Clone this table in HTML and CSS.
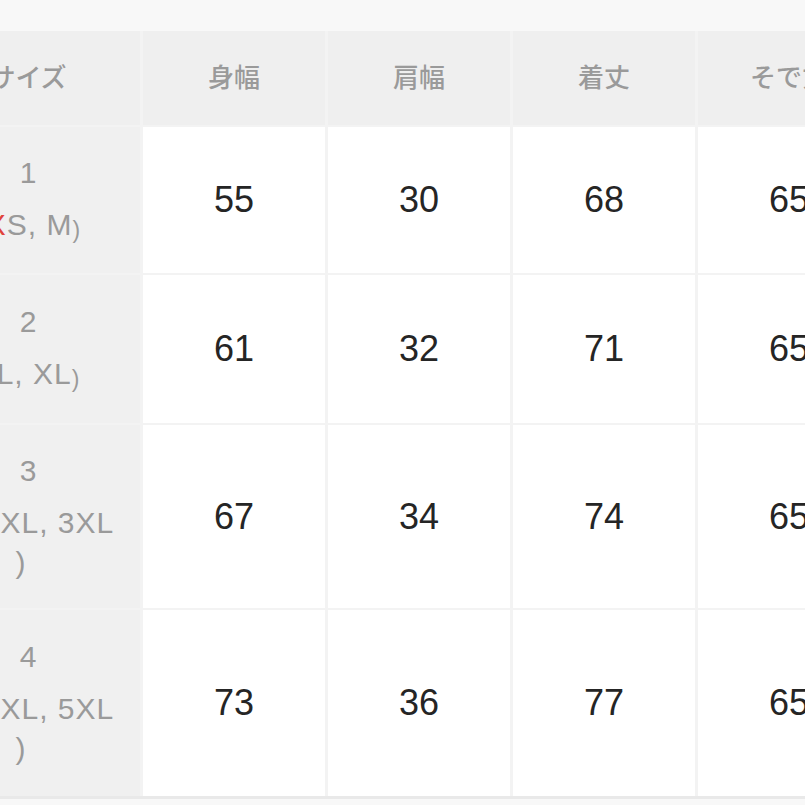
FILE: index.html
```html
<!DOCTYPE html>
<html lang="ja">
<head>
<meta charset="utf-8">
<link rel="stylesheet" href="styles.css">
</head>
<body>
<div class="viewport">
  <div class="table">
    <div class="th th-first">サイズ</div>
    <div class="th">身幅</div>
    <div class="th">肩幅</div>
    <div class="th">着丈</div>
    <div class="th">そで丈</div>

    <div class="label r1"><div class="num">1</div><div class="size">(<span class="red">X</span>S, M<span class="pc">)</span></div></div>
    <div class="cell">55</div>
    <div class="cell">30</div>
    <div class="cell">68</div>
    <div class="cell">65</div>

    <div class="label r2"><div class="num">2</div><div class="size shift">(L, XL<span class="pc">)</span></div></div>
    <div class="cell">61</div>
    <div class="cell">32</div>
    <div class="cell">71</div>
    <div class="cell">65</div>

    <div class="label r3"><div class="num">3</div><div class="size wide">(2XL, 3XL</div><div class="size close">)</div></div>
    <div class="cell">67</div>
    <div class="cell">34</div>
    <div class="cell">74</div>
    <div class="cell">65</div>

    <div class="label r4"><div class="num">4</div><div class="size wide">(4XL, 5XL</div><div class="size close">)</div></div>
    <div class="cell">73</div>
    <div class="cell">36</div>
    <div class="cell">77</div>
    <div class="cell">65</div>
  </div>
</div>
</body>
</html>
```
FILE: styles.css
```css
html, body {
  margin: 0;
  padding: 0;
  background: #f8f8f8;
}

.viewport {
  width: 805px;
  height: 805px;
  overflow: hidden;
  padding-top: 31px;
  box-sizing: border-box;
  background: #f8f8f8;
}

.table {
  display: grid;
  grid-template-columns: 224px 182px 182px 182px 182px;
  grid-template-rows: 94px 146px 148px 183px 186px;
  column-gap: 3px;
  row-gap: 2px;
  margin-left: -84px;
  width: max-content;
  background: #f3f3f3;
  border-bottom: 3px solid #e9e9e9;
}

.th {
  background: #efefef;
  display: flex;
  align-items: center;
  justify-content: center;
  padding-bottom: 6px;
  font-family: "Noto Sans CJK JP", "Noto Sans", sans-serif;
  font-weight: 500;
  font-size: 26px;
  color: #9a9a9a;
}

.label {
  background: #f0f0f0;
  display: flex;
  flex-direction: column;
  align-items: center;
  justify-content: center;
  font-family: "Liberation Sans", Arial, sans-serif;
  font-size: 30px;
  color: #9a9a9a;
  text-align: center;
}

.label .num {
  line-height: 40px;
  margin-bottom: 12px;
}

.label .size {
  line-height: 40px;
  letter-spacing: 1px;
  white-space: nowrap;
}

.label .size.shift {
  margin-left: 10px;
}

.label .size.wide {
  margin-left: 30px;
}

.label .size.close {
  margin-right: 14px;
}

.label .red {
  color: #e0433c;
}

.label .pc {
  font-size: 23px;
  position: relative;
  top: 3px;
}

.cell {
  background: #ffffff;
  display: flex;
  align-items: center;
  justify-content: center;
  font-family: "Liberation Sans", Arial, sans-serif;
  font-size: 36px;
  color: #252525;
}
```
